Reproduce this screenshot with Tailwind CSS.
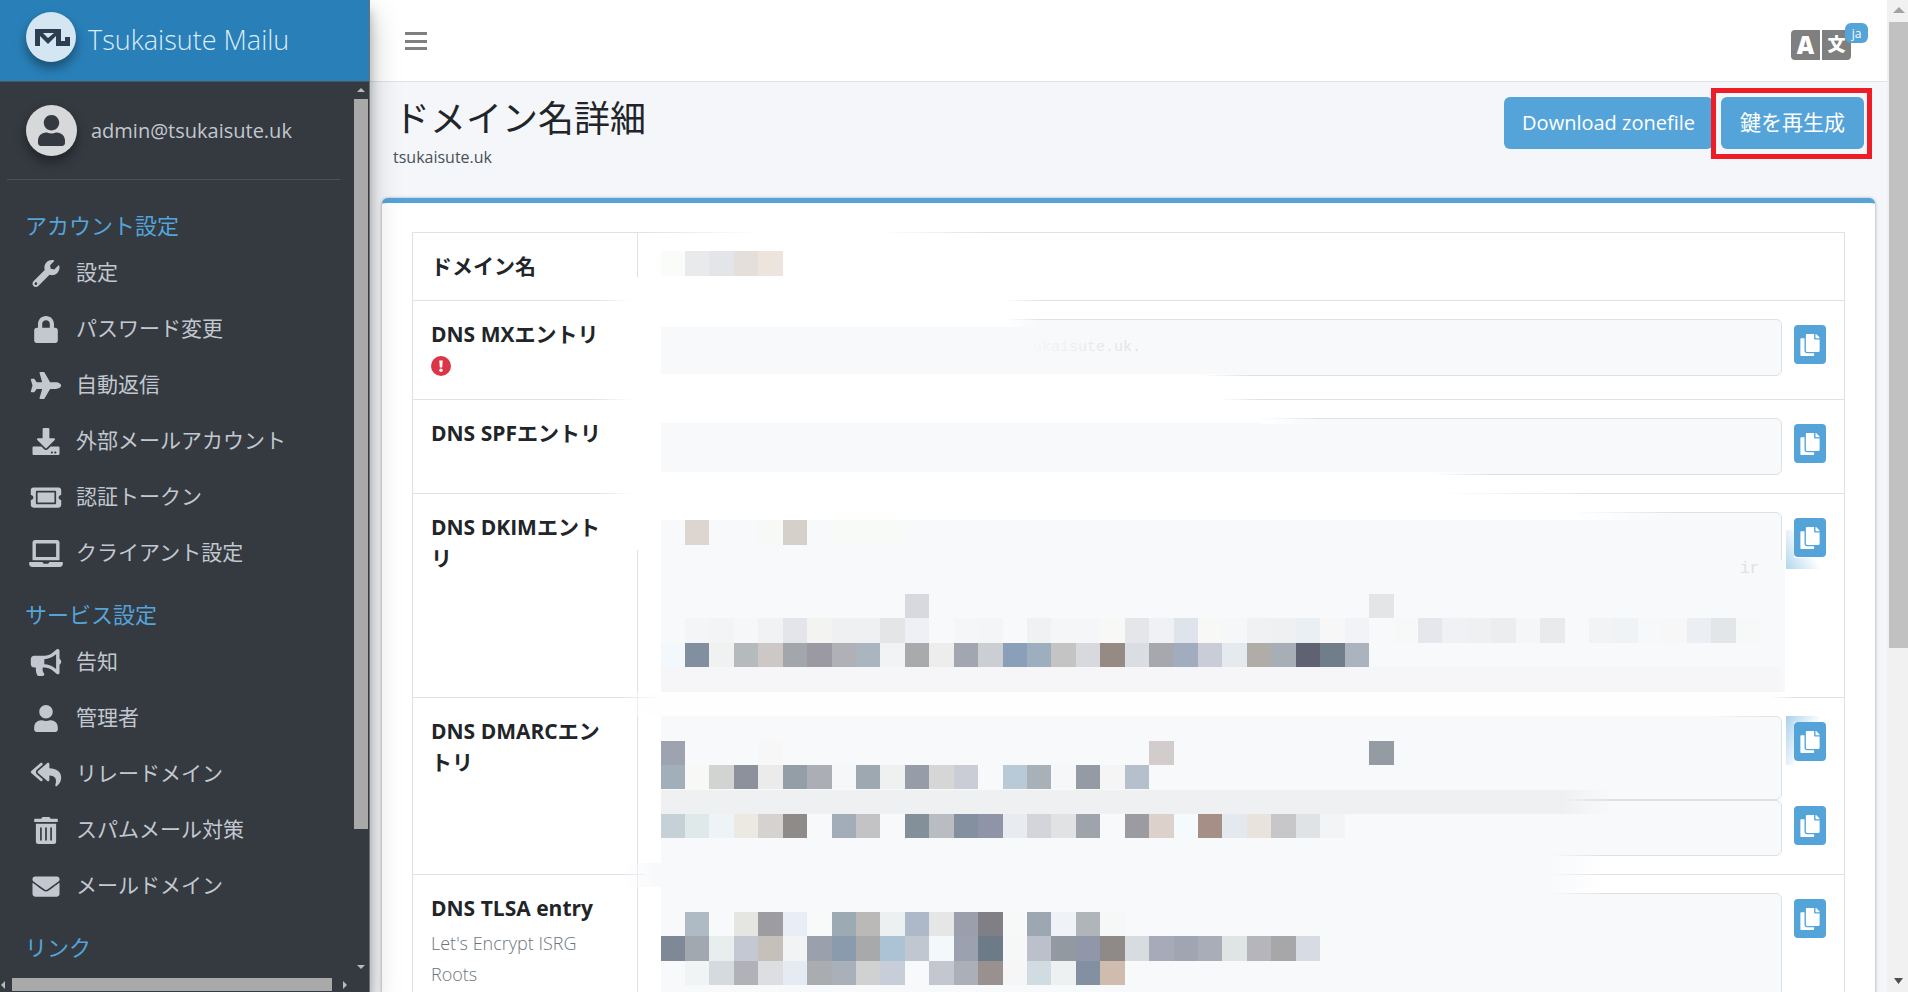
<!DOCTYPE html>
<html lang="ja">
<head>
    <meta charset="UTF-8">
    <meta name="viewport" content="width=device-width, initial-scale=1.0">
    <title>ドメイン名詳細 - Tsukaisute Mailu</title>
    <link rel="icon" href="data:,">
    <script src="https://cdn.jsdelivr.net/npm/@tailwindcss/browser@4"></script>
</head>
<body class="h-screen overflow-hidden flex bg-[#f4f6f9] text-[#212529] font-['Open_Sans','Noto_Sans_CJK_JP',sans-serif]">

    <!-- Icon set -->
    <svg class="hidden">
        <symbol id="i-wrench" viewBox="0 0 512 512"><path d="M507.73 109.1c-2.24-9.03-13.54-12.09-20.12-5.51l-74.36 74.36-67.88-11.31-11.31-67.88 74.36-74.36c6.62-6.62 3.43-17.9-5.66-20.16-47.38-11.74-99.55.91-136.58 37.93-39.64 39.64-50.55 97.1-34.05 147.2L18.74 402.76c-24.99 24.99-24.99 65.51 0 90.5 24.99 24.99 65.51 24.99 90.5 0l213.21-213.21c50.12 16.71 107.47 5.68 147.37-34.22 37.07-37.07 49.7-89.32 37.91-136.73zM64 472c-13.25 0-24-10.75-24-24 0-13.26 10.75-24 24-24s24 10.74 24 24c0 13.25-10.75 24-24 24z"/></symbol>
        <symbol id="i-lock" viewBox="0 0 448 512"><path d="M400 224h-24v-72C376 68.2 307.8 0 224 0S72 68.2 72 152v72H48c-26.5 0-48 21.5-48 48v192c0 26.5 21.5 48 48 48h352c26.5 0 48-21.5 48-48V272c0-26.5-21.5-48-48-48zm-104 0H152v-72c0-39.7 32.3-72 72-72s72 32.3 72 72v72z"/></symbol>
        <symbol id="i-plane" viewBox="0 0 576 512"><path d="M480 192H365.71L260.61 8.06A16.014 16.014 0 0 0 246.71 0h-65.5c-10.63 0-18.3 10.17-15.38 20.39L214.86 192H112l-43.2-57.6c-3.02-4.03-7.77-6.4-12.8-6.4H16.01C5.6 128-2.04 137.78.49 147.88L32 256 .49 364.12C-2.04 374.22 5.6 384 16.01 384H56c5.04 0 9.78-2.37 12.8-6.4L112 320h102.86l-49.03 171.6c-2.92 10.22 4.75 20.4 15.38 20.4h65.5c5.74 0 11.04-3.08 13.89-8.06L365.71 320H480c35.35 0 96-28.65 96-64s-60.65-64-96-64z"/></symbol>
        <symbol id="i-download" viewBox="0 0 512 512"><path d="M216 0h80c13.3 0 24 10.7 24 24v168h87.7c17.8 0 26.7 21.5 14.1 34.1L269.7 378.3c-7.5 7.5-19.8 7.5-27.3 0L90.1 226.1c-12.6-12.6-3.7-34.1 14.1-34.1H192V24c0-13.3 10.7-24 24-24zm296 376v112c0 13.3-10.7 24-24 24H24c-13.3 0-24-10.7-24-24V376c0-13.3 10.7-24 24-24h146.7l49 49c20.1 20.1 52.5 20.1 72.6 0l49-49H488c13.3 0 24 10.7 24 24zm-124 88c0-11-9-20-20-20s-20 9-20 20 9 20 20 20 20-9 20-20zm64 0c0-11-9-20-20-20s-20 9-20 20 9 20 20 20 20-9 20-20z"/></symbol>
        <symbol id="i-ticket" viewBox="0 0 576 512"><path d="M128 160h320v192H128V160zm400 96c0 26.51 21.49 48 48 48v96c0 26.51-21.49 48-48 48H48c-26.51 0-48-21.49-48-48v-96c26.51 0 48-21.49 48-48s-21.49-48-48-48v-96c0-26.51 21.49-48 48-48h480c26.51 0 48 21.49 48 48v96c-26.51 0-48 21.49-48 48zm-48-104c0-13.255-10.745-24-24-24H120c-13.255 0-24 10.745-24 24v208c0 13.255 10.745 24 24 24h336c13.255 0 24-10.745 24-24V152z"/></symbol>
        <symbol id="i-laptop" viewBox="0 0 640 512"><path d="M624 416H381.54c-.74 19.81-14.71 32-32.74 32H288c-18.69 0-33.02-17.47-32.77-32H16c-8.8 0-16 7.2-16 16v16c0 35.2 28.8 64 64 64h512c35.2 0 64-28.8 64-64v-16c0-8.8-7.2-16-16-16zM576 48c0-26.4-21.6-48-48-48H112C85.6 0 64 21.6 64 48v336h512V48zm-64 272H128V64h384v256z"/></symbol>
        <symbol id="i-bullhorn" viewBox="0 0 576 512"><path d="M576 240c0-23.63-12.95-44.04-32-55.12V32.01C544 23.26 537.02 0 512 0c-7.12 0-14.19 2.38-19.98 7.02l-85.03 68.03C364.28 109.19 310.66 128 256 128H64c-35.35 0-64 28.65-64 64v96c0 35.35 28.65 64 64 64h33.7c-1.39 10.48-2.18 21.14-2.18 32 0 39.77 9.26 77.35 25.56 110.94 5.19 10.69 16.52 17.06 28.4 17.06h74.28c26.05 0 41.69-29.84 25.9-50.56-16.4-21.52-26.15-48.36-26.15-77.44 0-11.11 1.62-21.79 4.41-32H256c54.66 0 108.28 18.81 150.98 52.95l85.03 68.03a32.023 32.023 0 0 0 19.98 7.02c24.92 0 32-22.78 32-32V295.13C563.05 284.04 576 263.63 576 240zm-96 141.42l-33.05-26.44C392.95 311.78 325.12 288 256 288v-96c69.12 0 136.95-23.78 190.95-66.98L480 98.58v282.84z"/></symbol>
        <symbol id="i-user" viewBox="0 0 448 512"><path d="M224 256c70.7 0 128-57.3 128-128S294.7 0 224 0 96 57.3 96 128s57.3 128 128 128zm89.6 32h-16.7c-22.2 10.2-46.9 16-72.9 16s-50.6-5.8-72.9-16h-16.7C60.2 288 0 348.2 0 422.4V464c0 26.5 21.5 48 48 48h352c26.5 0 48-21.5 48-48v-41.6c0-74.2-60.2-134.4-134.4-134.4z"/></symbol>
        <symbol id="i-reply-all" viewBox="0 0 576 512"><path d="M136.309 189.836L312.313 37.851C327.72 24.546 352 35.348 352 56.015v82.763c129.182 10.231 224 52.212 224 183.548 0 61.441-39.582 122.309-83.333 154.132-13.653 9.931-33.111-2.533-28.077-18.631 38.512-123.162-3.922-169.482-112.59-182.015v84.175c0 20.701-24.3 31.453-39.687 18.164L136.309 226.164c-11.071-9.561-11.086-26.753 0-36.328zm-128 36.328L184.313 378.15C199.7 391.439 224 380.687 224 359.986v-15.818l-108.606-93.785A55.96 55.96 0 0 1 96 207.998a55.953 55.953 0 0 1 19.393-42.38L224 71.832V56.015c0-20.667-24.28-31.469-39.687-18.164L8.309 189.836c-11.086 9.575-11.071 26.767 0 36.328z"/></symbol>
        <symbol id="i-trash" viewBox="0 0 448 512"><path d="M32 464a48 48 0 0 0 48 48h288a48 48 0 0 0 48-48V128H32zm272-256a16 16 0 0 1 32 0v224a16 16 0 0 1-32 0zm-96 0a16 16 0 0 1 32 0v224a16 16 0 0 1-32 0zm-96 0a16 16 0 0 1 32 0v224a16 16 0 0 1-32 0zM432 32H312l-9.4-18.7A24 24 0 0 0 281.1 0H166.8a23.72 23.72 0 0 0-21.4 13.3L136 32H16A16 16 0 0 0 0 48v32a16 16 0 0 0 16 16h416a16 16 0 0 0 16-16V48a16 16 0 0 0-16-16z"/></symbol>
        <symbol id="i-envelope" viewBox="0 0 512 512"><path d="M502.3 190.8c3.9-3.1 9.7-.2 9.7 4.7V400c0 26.5-21.5 48-48 48H48c-26.5 0-48-21.5-48-48V195.6c0-5 5.7-7.8 9.7-4.7 22.4 17.4 52.1 39.5 154.1 113.6 21.1 15.4 56.7 47.8 92.2 47.6 35.7.3 72-32.8 92.3-47.6 102-74.1 131.6-96.3 154-113.7zM256 320c23.2.4 56.6-29.2 73.4-41.4 132.7-96.3 142.8-104.7 173.4-128.7 5.8-4.5 9.2-11.5 9.2-18.9v-19c0-26.5-21.5-48-48-48H48c-26.5 0-48 21.5-48 48v19c0 7.4 3.4 14.3 9.2 18.9 30.6 23.9 40.7 32.4 173.4 128.7 16.8 12.2 50.2 41.8 73.4 41.4z"/></symbol>
        <symbol id="i-copy" viewBox="0 0 448 512"><path d="M320 448v40c0 13.255-10.745 24-24 24H24c-13.255 0-24-10.745-24-24V120c0-13.255 10.745-24 24-24h72v296c0 30.879 25.121 56 56 56h168zm0-344V0H152c-13.255 0-24 10.745-24 24v368c0 13.255 10.745 24 24 24h272c13.255 0 24-10.745 24-24V128H344c-13.2 0-24-10.8-24-24zm120.971-31.029L375.029 7.029A24 24 0 0 0 358.059 0H352v96h96v-6.059a24 24 0 0 0-7.029-16.97z"/></symbol>
    </svg>

    <!-- Sidebar -->
    <aside class="relative z-20 w-[370px] shrink-0 flex flex-col bg-[#343a40] text-[#c2c7d0] border-r border-[#6c7075] shadow-[0_14px_28px_rgba(0,0,0,0.25),0_10px_10px_rgba(0,0,0,0.22)]">
        <a href="#" class="h-[82px] shrink-0 flex items-start gap-3 pt-3 pl-[26px] bg-[#2980b9] border-b border-[#4b545c]">
            <span class="size-[50px] rounded-full bg-[#d4e6f1] flex items-center justify-center shadow-[0_6px_12px_rgba(0,0,0,0.4)]">
                <svg class="w-9 h-5 ml-1" viewBox="0 0 36 20"><path fill="#2c3e50" d="M0 2h26v12h4v-4h5v9H21V9l-8 8-8-8v10H0zM8 6l5 5 6-5z"/></svg>
            </span>
            <span class="text-[27px] leading-[56px] font-light text-[#dcebf5]">Tsukaisute Mailu</span>
        </a>
        <div class="flex-1 min-h-0 flex">
            <div class="flex-1 min-w-0 overflow-hidden">
                <a href="#" class="h-[98px] ml-[7px] mr-[13px] pl-[19px] flex items-center gap-[14px] border-b border-[#4b545c]">
                    <span class="size-[51px] rounded-full bg-[#d6d8d9] flex items-center justify-center text-[#343a40] shadow-[0_6px_12px_rgba(0,0,0,0.4)]">
                        <svg class="h-[31px] w-[27px]" fill="currentColor"><use href="#i-user"/></svg>
                    </span>
                    <span class="text-[20px]">admin@tsukaisute.uk</span>
                </a>
                <nav class="pt-[26px] text-[21px]">
                    <h2 class="h-[39px] leading-[39px] pl-[25px] text-[22px] text-[#54a4d9]">アカウント設定</h2>
                    <ul>
                        <li><a href="#" class="h-14 pl-7 flex items-center gap-3"><svg class="w-9 h-[27px]" fill="currentColor"><use href="#i-wrench"/></svg>設定</a></li>
                        <li><a href="#" class="h-14 pl-7 flex items-center gap-3"><svg class="w-9 h-[27px]" fill="currentColor"><use href="#i-lock"/></svg>パスワード変更</a></li>
                        <li><a href="#" class="h-14 pl-7 flex items-center gap-3"><svg class="w-9 h-[27px]" fill="currentColor"><use href="#i-plane"/></svg>自動返信</a></li>
                        <li><a href="#" class="h-14 pl-7 flex items-center gap-3"><svg class="w-9 h-[27px]" fill="currentColor"><use href="#i-download"/></svg>外部メールアカウント</a></li>
                        <li><a href="#" class="h-14 pl-7 flex items-center gap-3"><svg class="w-9 h-[27px]" fill="currentColor"><use href="#i-ticket"/></svg>認証トークン</a></li>
                        <li><a href="#" class="h-14 pl-7 flex items-center gap-3"><svg class="w-9 h-[27px]" fill="currentColor"><use href="#i-laptop"/></svg>クライアント設定</a></li>
                    </ul>
                    <h2 class="mt-[14px] h-[39px] leading-[39px] pl-[25px] text-[22px] text-[#54a4d9]">サービス設定</h2>
                    <ul>
                        <li><a href="#" class="h-14 pl-7 flex items-center gap-3"><svg class="w-9 h-[27px]" fill="currentColor"><use href="#i-bullhorn"/></svg>告知</a></li>
                        <li><a href="#" class="h-14 pl-7 flex items-center gap-3"><svg class="w-9 h-[27px]" fill="currentColor"><use href="#i-user"/></svg>管理者</a></li>
                        <li><a href="#" class="h-14 pl-7 flex items-center gap-3"><svg class="w-9 h-[27px]" fill="currentColor"><use href="#i-reply-all"/></svg>リレードメイン</a></li>
                        <li><a href="#" class="h-14 pl-7 flex items-center gap-3"><svg class="w-9 h-[27px]" fill="currentColor"><use href="#i-trash"/></svg>スパムメール対策</a></li>
                        <li><a href="#" class="h-14 pl-7 flex items-center gap-3"><svg class="w-9 h-[27px]" fill="currentColor"><use href="#i-envelope"/></svg>メールドメイン</a></li>
                    </ul>
                    <h2 class="mt-[14px] h-[39px] leading-[39px] pl-[25px] text-[22px] text-[#54a4d9]">リンク</h2>
                </nav>
            </div>
            <!-- vertical scrollbar -->
            <div class="w-4 shrink-0 flex flex-col items-center justify-between pt-1.5">
                <svg class="w-2 h-1" viewBox="0 0 8 4"><path fill="#bbb" d="M4 0l4 4H0z"/></svg>
                <div class="mt-[7px] w-[14px] h-[730px] bg-[#a9a9a9]"></div>
                <div class="flex-1"></div>
                <svg class="w-2 h-1 mb-2" viewBox="0 0 8 4"><path fill="#bbb" d="M0 0h8L4 4z"/></svg>
            </div>
        </div>
        <!-- horizontal scrollbar -->
        <div class="h-[15px] shrink-0 flex items-center gap-[7px] pl-px pr-[22px]">
            <svg class="w-1 h-2" viewBox="0 0 4 8"><path fill="#bbb" d="M4 0v8L0 4z"/></svg>
            <div class="w-[320px] h-[13px] bg-[#a9a9a9]"></div>
            <svg class="w-1 h-2 ml-1" viewBox="0 0 4 8"><path fill="#bbb" d="M0 0v8l4-4z"/></svg>
        </div>
    </aside>

    <!-- Main column -->
    <div class="flex-1 min-w-0 flex flex-col">
        <header class="h-[82px] shrink-0 flex items-center justify-between pl-[35px] pr-9 bg-white border-b border-[#dee2e6]">
            <button type="button" aria-label="メニュー">
                <svg class="w-[22px] h-5" viewBox="0 0 22 20" fill="#7f7f7f"><path d="M0 1h22v3H0zM0 9h22v3H0zM0 16h22v3H0z"/></svg>
            </button>
            <a href="#" class="relative flex gap-0.5 mt-2 text-white font-bold">
                <span class="w-[29px] h-[30px] rounded-l-sm bg-[#7f7f7f] text-center text-[24px] leading-[29px] font-extrabold">A</span>
                <span class="w-[29px] h-[30px] rounded-r-sm bg-[#7f7f7f] text-center text-[18px] leading-[29px] font-black">文</span>
                <span class="absolute -top-[7px] left-[54px] w-[23px] h-5 rounded-md bg-[#54a4d9] text-center text-[12px] leading-[22px] font-normal">ja</span>
            </a>
        </header>

        <main class="flex-1 min-h-0 overflow-hidden px-3">
            <div class="h-[116px] flex justify-between pt-[15px] pr-[11px]">
                <div>
                    <h1 class="pl-3 text-[36px] leading-[44px]">ドメイン名詳細</h1>
                    <p class="pl-[11px] mt-1 text-[16px] leading-6 text-[#495057]">tsukaisute.uk</p>
                </div>
                <div class="flex items-start gap-2 text-[20px] text-white">
                    <button type="button" class="h-[52px] px-[18px] rounded-md bg-[#54a4d9]">Download zonefile</button>
                    <div class="relative">
                        <button type="button" class="h-[52px] px-[19px] rounded-md bg-[#54a4d9] text-[21px]">鍵を再生成</button>
                        <div class="absolute -top-[9px] -left-[10px] -right-2 -bottom-[10px] border-[5px] border-[#ee1c25]"></div>
                    </div>
                </div>
            </div>

            <section class="bg-white rounded-md border-t-[5px] border-[#54a4d9] px-[30px] pt-[29px] pb-[30px] shadow-[0_0_2px_rgba(0,0,0,0.2),0_1px_4px_rgba(0,0,0,0.25)]">
                <div class="relative">
                    <table class="w-full border-collapse text-left align-top [&_th]:w-[225px] [&_th]:border [&_th]:border-[#dee2e6] [&_th]:py-[18px] [&_th]:pl-[18px] [&_th]:pr-7 [&_th]:align-top [&_th]:text-[21px] [&_th]:leading-[31px] [&_td]:border [&_td]:border-[#dee2e6] [&_td]:p-[18px] [&_td]:align-top">
                        <tr>
                            <th>ドメイン名</th>
                            <td></td>
                        </tr>
                        <tr>
                            <th id="mx">DNS MXエントリ
                                <span class="h-[31px] flex items-center">
                                    <svg class="size-5" viewBox="0 0 20 20"><circle cx="10" cy="10" r="10" fill="#dc3545"/><path fill="#fff" d="M8.300 4.500h3.400l-.5 7H8.800z"/><circle cx="10" cy="14.300" r="1.700" fill="#fff"/></svg>
                                </span>
                            </th>
                            <td>
                                <div class="flex gap-3">
                                    <textarea readonly aria-labelledby="mx" class="flex-1 h-[57px] resize-none rounded-md border border-[#dee2e6] bg-[#f8f9fb]"></textarea>
                                    <button type="button" aria-label="コピー" class="mt-1.5 w-8 h-[39px] rounded bg-[#54a4d9] text-white flex items-center justify-center"><svg class="w-5 h-[22px]" fill="currentColor"><use href="#i-copy"/></svg></button>
                                </div>
                            </td>
                        </tr>
                        <tr>
                            <th id="spf">DNS SPFエントリ</th>
                            <td>
                                <div class="flex gap-3">
                                    <textarea readonly aria-labelledby="spf" class="flex-1 h-[57px] resize-none rounded-md border border-[#dee2e6] bg-[#f8f9fb]"></textarea>
                                    <button type="button" aria-label="コピー" class="mt-1.5 w-8 h-[39px] rounded bg-[#54a4d9] text-white flex items-center justify-center"><svg class="w-5 h-[22px]" fill="currentColor"><use href="#i-copy"/></svg></button>
                                </div>
                            </td>
                        </tr>
                        <tr>
                            <th id="dkim">DNS DKIMエントリ</th>
                            <td>
                                <div class="flex gap-3">
                                    <textarea readonly aria-labelledby="dkim" class="flex-1 h-[167px] resize-none rounded-md border border-[#dee2e6] bg-[#f8f9fb]"></textarea>
                                    <button type="button" aria-label="コピー" class="mt-1.5 w-8 h-[39px] rounded bg-[#54a4d9] text-white flex items-center justify-center"><svg class="w-5 h-[22px]" fill="currentColor"><use href="#i-copy"/></svg></button>
                                </div>
                            </td>
                        </tr>
                        <tr>
                            <th id="dmarc">DNS DMARCエントリ</th>
                            <td>
                                <div class="flex gap-3">
                                    <textarea readonly aria-labelledby="dmarc" class="flex-1 h-[84px] resize-none rounded-md border border-[#dee2e6] bg-[#f8f9fb]"></textarea>
                                    <button type="button" aria-label="コピー" class="mt-1.5 w-8 h-[39px] rounded bg-[#54a4d9] text-white flex items-center justify-center"><svg class="w-5 h-[22px]" fill="currentColor"><use href="#i-copy"/></svg></button>
                                </div>
                                <div class="flex gap-3">
                                    <textarea readonly aria-labelledby="dmarc" class="flex-1 h-[56px] resize-none rounded-md border border-[#dee2e6] bg-[#f8f9fb]"></textarea>
                                    <button type="button" aria-label="コピー" class="mt-1.5 w-8 h-[39px] rounded bg-[#54a4d9] text-white flex items-center justify-center"><svg class="w-5 h-[22px]" fill="currentColor"><use href="#i-copy"/></svg></button>
                                </div>
                            </td>
                        </tr>
                        <tr>
                            <th id="tlsa">DNS TLSA entry
                                <small class="block mt-1 text-[18px] leading-[31px] font-light text-[#6c757d]">Let's Encrypt ISRG Roots</small>
                            </th>
                            <td>
                                <div class="flex gap-3">
                                    <textarea readonly aria-labelledby="tlsa" class="flex-1 h-[140px] resize-none rounded-md border border-[#dee2e6] bg-[#f8f9fb]"></textarea>
                                    <button type="button" aria-label="コピー" class="mt-1.5 w-8 h-[39px] rounded bg-[#54a4d9] text-white flex items-center justify-center"><svg class="w-5 h-[22px]" fill="currentColor"><use href="#i-copy"/></svg></button>
                                </div>
                            </td>
                        </tr>
                    </table>
                    <!-- pixelated cover over the private record values -->
                    <svg id="mosaic" class="absolute top-0 left-0 w-[1433px] h-[761px] pointer-events-none" viewBox="412 232 1433 761"></svg>
                </div>
            </section>
        </main>
    </div>

    <!-- Page scrollbar -->
    <div class="w-[21px] shrink-0 bg-[#f1f1f1] flex flex-col items-center pt-[7px] pl-0.5">
        <svg class="w-3 h-1.5" viewBox="0 0 12 6"><path fill="#a3a3a3" d="M6 0l6 6H0z"/></svg>
        <div class="mt-[9px] w-full h-[626px] bg-[#c1c1c1]"></div>
        <div class="flex-1"></div>
        <svg class="w-[9px] h-1.5 mb-2" viewBox="0 0 9 6"><path fill="#505050" d="M0 0h9L4.500 6z"/></svg>
    </div>

    <script>
        // colour bands: [x, y, width, height, colour, fade left, fade right]
        const bands = [
            [760, 229, 120, 8, '#fff', 120, 110],
            [632, 277, 373, 12, '#fff', 0, 0],
            [632, 289, 373, 38, '#fff', 35, 35],
            [632, 326, 29, 49, '#fff', 20, 0],
            [632, 374, 568, 10, '#fff', 30, 50],
            [632, 384, 588, 26, '#fff', 40, 40],
            [632, 410, 628, 14, '#fff', 30, 60],
            [632, 422, 29, 50, '#fff', 20, 0],
            [632, 472, 800, 10, '#fff', 30, 60],
            [632, 482, 808, 20, '#fff', 35, 160],
            [632, 502, 940, 18, '#fff', 20, 100],
            [632, 520, 29, 30, '#fff', 0, 0],
            [640, 550, 21, 142, '#fff', 0, 0],
            [660, 692, 1110, 24, '#fefefe', 40, 25],
            [645, 716, 16, 280, '#fff', 0, 0],
            [661, 327, 360, 47, '#f8f9fb', 0, 0],
            [661, 423, 600, 49, '#f8f9fb', 0, 0],
            [661, 520, 1115, 147, '#f8f9fb', 0, 0],
            [1776, 560, 9, 132, '#f8f9fb', 0, 0],
            [661, 667, 1115, 25, '#f6f6f8', 0, 9],
            [661, 716, 1050, 12, '#f8f9fb', 0, 60],
            [661, 790, 900, 24, '#eff0f2', 0, 50],
            [661, 814, 890, 73, '#f8f9fb', 0, 50],
            [656, 863, 10, 24, '#f8f9fb', 36, 0],
            [661, 887, 890, 25, '#f8f9fb', 0, 50]
        ];

        // mosaic rows: y, then "column:colour"
        const rows = {
            251: '0:fafcfa 1:e9eaec 2:e3e5e8 3:e4dfdb 4:ede4dd',
            520: '1:ddd5cf 4:f7f9f7 5:d5d0c9 7:f8faf8 8:f8faf8 9:f8faf8',
            594: '10:d8d9df 29:e4e5e7',
            618: '1:f4f5f7 2:f3f4f6 3:f6f7f9 4:f1f2f4 5:e4e5ea 6:f3f3f2 7:eff0f2 8:eff0f2 9:e4e5e7 10:eff0f5 12:f5f6f8 13:f3f5f7 15:f0f1f3 16:f5f6f8 17:f5f6f8 18:f8f8f7 19:e5e6ea 20:f0f1f4 21:dfe4ec 22:f8f8f7 23:f5f7f9 24:f0f1f3 25:eff0f1 26:eaeff3 27:f7f7f7 28:f2f3f6 30:f7f9f8 31:e5e7ec 32:f0f1f4 33:eff0f2 34:ecedef 35:f5f6f8 36:e9eaec 38:f2f3f5 39:eff3f5 40:f7f8fa 41:f8f7f7 42:ebeff3 43:e2e6e9 44:f7f9f8',
            643: '0:f3f8fc 1:828fa0 2:f0f2f1 3:b5babd 4:cdc8c5 5:a3a6ab 6:9b9aa3 7:afb1b7 8:abb5bf 9:f2f3f5 10:a9aaab 11:ecedec 12:a2a6b0 13:cbcfd3 14:8aa0b8 15:9dafbf 16:c4c4c4 17:d8d9de 18:958a84 19:dadde2 20:a7a8ae 21:a1adbe 22:cacdd7 23:e5eaee 24:b0aca7 25:a7aeb6 26:606272 27:707d8a 28:abb3be',
            741: '0:9da3af 4:f7f7f7 20:d2cccd 29:959ba3',
            765: '0:a2aeb9 1:f8f8f6 2:d2d4d1 3:8d919b 4:ebebeb 5:939ea6 6:abaeb4 7:f6f7f9 8:9da8b1 9:eff1f0 10:979da8 11:d7d6d6 12:cacdd6 14:b8cad7 15:a8b0b8 16:f6f7f8 17:949ba5 18:f5f5f5 19:b6c0cd',
            814: '0:c6d1d7 1:dfe9ea 2:eef3f7 3:ece9e2 4:d6d2cf 5:8f8b88 7:a3acb9 8:c3c3c6 10:83909a 11:b9bcc1 12:8490a0 13:9094a9 14:e8ecf0 15:d4d5db 16:e1e2e3 17:9fa4ac 19:9c9ba1 20:ddd1cc 21:f5fafc 22:a58f87 23:e3e9ee 24:e8e3dd 25:c7c7ca 26:dfe3e6 27:f2f4f6',
            912: '1:aebbc5 3:e5e6e1 4:9c9ca1 5:e8edf6 6:f8f9f9 7:9caab4 8:bbb9b8 9:ecf0f1 10:adb8c8 11:e7e6e6 12:9b9fab 13:807f86 14:f7f8f8 15:9ca7b1 16:eff3f7 17:b0b5ba 18:f6f8f7',
            936: '0:7f8897 1:a1a8b0 2:e8eeee 3:c4c8d2 4:c6c0ba 5:f2f3f5 6:9ba1ac 7:8a9bad 8:a8a9aa 9:acc3d5 10:c1c7d0 11:f3f9fa 12:9ba1af 13:6d7a88 14:f6f7f7 15:bbc0ca 16:9299a1 17:9196a8 18:8f8987 19:d7dce0 20:a7abb9 21:9fa6b2 22:a9adb7 23:dfe4e4 24:b6b5bb 25:a7a7a9 26:d7dce4',
            961: '1:f1f4f4 2:d5dadf 3:b1b1b8 4:dddee1 5:e4ebf3 6:aaadb0 7:a9b0ba 8:d0d1d1 9:c8cdda 11:c4c7d0 12:aaafb8 13:999090 14:f6f6f6 15:d1dce2 16:edf1f2 17:8290a1 18:d0bcae'
        };

        const rect = (x, y, w, h, fill) => `<rect x="${x}" y="${y}" width="${w}" height="${h}" fill="${fill}" shape-rendering="crispEdges"/>`;
        let out = '<defs>';
        for (const c of ['fff', 'fefefe', 'f8f9fb', 'f6f6f8', 'eff0f2']) {
            out += `<linearGradient id="in-${c}"><stop stop-color="#${c}" stop-opacity="0"/><stop offset="1" stop-color="#${c}"/></linearGradient>`;
            out += `<linearGradient id="out-${c}"><stop stop-color="#${c}"/><stop offset="1" stop-color="#${c}" stop-opacity="0"/></linearGradient>`;
        }
        out += '<linearGradient id="smear-up" x1="0" y1="1" x2=".7" y2=".5"><stop stop-color="#54a4d9" stop-opacity=".45"/><stop offset="1" stop-color="#54a4d9" stop-opacity="0"/></linearGradient>';
        out += '<linearGradient id="smear-down" x1="0" y1="0" x2=".7" y2=".5"><stop stop-color="#54a4d9" stop-opacity=".5"/><stop offset="1" stop-color="#54a4d9" stop-opacity="0"/></linearGradient>';
        out += '<linearGradient id="ink"><stop stop-color="#f4f5f7"/><stop offset="1" stop-color="#dfe2e5"/></linearGradient></defs>';
        for (const [x, y, w, h, c, left, right] of bands) {
            const id = c.slice(1);
            if (left) out += rect(x - left, y, left, h, `url(#in-${id})`);
            out += rect(x, y, w, h, c);
            if (right) out += rect(x + w, y, right, h, `url(#out-${id})`);
        }
        for (const y in rows) {
            for (const cell of rows[y].split(' ')) {
                const [col, colour] = cell.split(':');
                const x = Math.round(660.6 + col * 24.43);
                const next = Math.round(660.6 + (+col + 1) * 24.43);
                out += rect(x, y, next - x, y == 251 || y == 520 || y == 618 || y == 936 ? 25 : 24, '#' + colour);
            }
        }
        out += '<path fill="url(#smear-up)" d="M1786 530h8v28h26v11h-34z"/>';
        out += '<path fill="url(#smear-down)" d="M1786 716h34v6h-26v43h-8z"/>';
        out += '<text x="1033" y="351" font-size="15" fill="url(#ink)" font-family="Liberation Mono, monospace">ukaisute.uk.</text>';
        out += '<text x="1740" y="573" font-size="16" fill="#dfe1e4" font-family="Liberation Mono, monospace">ir</text>';
        document.getElementById('mosaic').innerHTML = out;
    </script>
</body>
</html>
